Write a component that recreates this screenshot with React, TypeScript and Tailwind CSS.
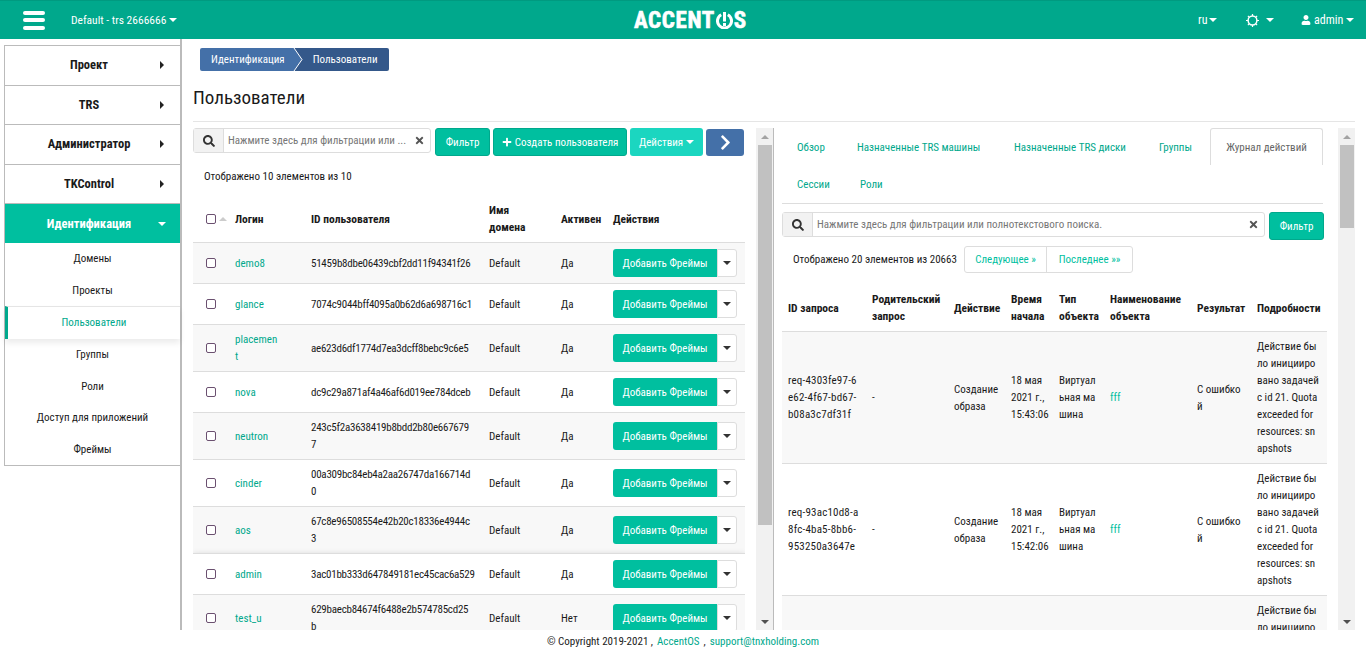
import React from "react";
import { FaChevronRight, FaPlus, FaSearch, FaTimes, FaUser } from "react-icons/fa";

const font = "font-['Liberation_Sans_Narrow','Roboto_Condensed','Roboto',sans-serif]";

const users = [
  ["demo8", "51459b8dbe06439cbf2dd11f94341f26", "Да"],
  ["glance", "7074c9044bff4095a0b62d6a698716c1", "Да"],
  ["placemen\nt", "ae623d6df1774d7ea3dcff8bebc9c6e5", "Да"],
  ["nova", "dc9c29a871af4a46af6d019ee784dceb", "Да"],
  ["neutron", "243c5f2a3638419b8bdd2b80e667679\n7", "Да"],
  ["cinder", "00a309bc84eb4a2aa26747da166714d\n0", "Да"],
  ["aos", "67c8e96508554e42b20c18336e4944c\n3", "Да"],
  ["admin", "3ac01bb333d647849181ec45cac6a529", "Да"],
  ["test_u", "629baecb84674f6488e2b574785cd25\nb", "Нет"],
];

const logs = [
  ["req-4303fe97-6\ne62-4f67-bd67-\nb08a3c7df31f", "15:43:06"],
  ["req-93ac10d8-a\n8fc-4ba5-8bb6-\n953250a3647e", "15:42:06"],
];

const details = "Действие бы\nло иницииро\nвано задачей\nс id 21. Quota\nexceeded for\nresources: sn\napshots";

const menu = ["Проект", "TRS", "Администратор", "TKControl"];
const subMenu = ["Домены", "Проекты", "Пользователи", "Группы", "Роли", "Доступ для приложений", "Фреймы"];

function Caret({ className = "border-t-white" }: { className?: string }) {
  return <span className={`inline-block w-0 h-0 border-x-[4px] border-x-transparent border-t-[4px] ${className}`} />;
}

function Gear() {
  return (
    <svg width="13" height="13" viewBox="0 0 13 13" fill="none" stroke="#fff">
      <circle cx="6.5" cy="6.5" r="4.4" strokeWidth="1.5" />
      <path d="M6.5 0v2M6.5 11v2M0 6.5h2M11 6.5h2M1.9 1.9l1.4 1.4M9.7 9.7l1.4 1.4M1.9 11.1l1.4-1.4M9.7 3.3l1.4-1.4" strokeWidth="1.2" />
    </svg>
  );
}

function Scrollbar({ thumb }: { thumb: string }) {
  return (
    <div className="w-[17px] shrink-0 bg-[#f1f1f1] flex flex-col items-center">
      <div className="h-[17px] flex items-center justify-center">
        <span className="w-0 h-0 border-x-[4px] border-x-transparent border-b-[4px] border-b-[#a3a3a3]" />
      </div>
      <div className={`w-[14px] bg-[#c1c1c1] ${thumb}`} />
      <div className="flex-1" />
      <div className="h-[17px] flex items-center justify-center">
        <Caret className="border-t-[#505050]" />
      </div>
    </div>
  );
}

function Checkbox() {
  return <span className="block w-[10px] h-[10px] border border-[#6b5070] rounded-[2px] bg-white" />;
}

function SearchBox({ text, className }: { text: string; className: string }) {
  return (
    <div className={`flex h-[25px] border border-[#ddd] rounded-[3px] bg-white ${className}`}>
      <div className="w-[30px] shrink-0 flex items-center justify-center bg-[#f2f2f2] border-r border-[#ddd] text-[#333]">
        <FaSearch size={12} />
      </div>
      <div className="flex-1 min-w-0 px-[4px] leading-[23px] text-[#777] truncate">{text}</div>
      <div className="w-[16px] shrink-0 flex items-center text-[#555]">
        <FaTimes size={11} />
      </div>
    </div>
  );
}

export default function App() {
  return (
    <div className={`${font} h-[652px] flex flex-col overflow-hidden bg-white text-[11px] leading-[17px] text-[#1a1a1a]`}>
      <header className="h-[39px] shrink-0 bg-[#00a88c] border-t border-[#009a80] flex items-center text-white text-[12px]">
        <div className="w-[71px] pl-[23px] flex flex-col gap-[3.5px]">
          <span className="block w-[22px] h-[4px] rounded-sm bg-white" />
          <span className="block w-[22px] h-[4px] rounded-sm bg-white" />
          <span className="block w-[22px] h-[4px] rounded-sm bg-white" />
        </div>
        <div className="w-[563px] flex items-center gap-[3px] text-[11.5px]">
          Default - trs 2666666 <Caret />
        </div>
        <div className="flex items-center text-[23px] leading-none font-bold tracking-[0.6px] [-webkit-text-stroke:0.6px_white]">
          ACCENT
          <svg width="17" height="17" viewBox="0 0 17 17" className="mx-[1px]">
            <path d="M5.2 2.8a7 7 0 1 0 6.6 0" fill="none" stroke="#fff" strokeWidth="3" />
            <rect x="7" y="0" width="3" height="9.5" fill="#fff" />
            <rect x="7" y="11" width="3" height="3" fill="#fff" />
          </svg>
          S
        </div>
        <div className="flex-1" />
        <div className="flex items-center gap-[2px] w-[48px]">ru <Caret /></div>
        <div className="flex items-center gap-[7px] w-[55px]"><Gear /> <Caret /></div>
        <div className="flex items-center gap-[3px] w-[65px]"><FaUser size={10} /> admin <Caret /></div>
      </header>

      <div className="flex-1 min-h-0 flex">
        <aside className="w-[182px] shrink-0 pl-[4px] border-r-[2px] border-[#bbb]">
          <nav className="mt-[6px] border border-r-0 border-[#bbb] bg-white">
            {menu.map((item) => (
              <div key={item} className="h-[39.5px] flex items-center border-b border-[#bbb] text-[12.5px] font-bold">
                <span className="w-[169px] text-center pr-[1px] pb-[1px]">{item}</span>
                <span className="w-0 h-0 -ml-[14px] border-y-[4px] border-y-transparent border-l-[4px] border-l-[#222]" />
              </div>
            ))}
            <div className="h-[39px] flex items-center bg-[#00bf9f] text-[12.5px] font-bold text-white">
              <span className="w-[169px] text-center pr-[1px] pb-[1px]">Идентификация</span>
              <span className="-ml-[16px] flex"><Caret /></span>
            </div>
            <div>
              {subMenu.map((item) => (
                <div
                  key={item}
                  className={
                    item === "Пользователи"
                      ? "h-[33px] pb-[1px] flex items-center justify-center border-l-[3px] border-[#00a88c] border-t border-t-[#e5e5e5] shadow-[0_4px_6px_rgba(0,0,0,0.08)] text-[#00a88c]"
                      : "h-[31.5px] flex items-center justify-center"
                  }
                >
                  {item}
                </div>
              ))}
            </div>
          </nav>
        </aside>

        <main className="flex-1 min-w-0 pl-[11px] pr-[11px] flex flex-col">
          <div className="pt-[9px] pl-[7px]">
            <div className="inline-flex h-[23px] rounded-[2px] overflow-hidden text-white leading-[23px]">
              <span className="bg-[#4470a8] pl-[11px] pr-[8px]">Идентификация</span>
              <svg width="10" height="23" viewBox="0 0 10 23" className="block bg-[#34588a]">
                <path d="M0 0 L0 23 L1 23 L9 11.5 L1 0 Z" fill="#4470a8" />
                <path d="M1 0 L9 11.5 L1 23" fill="none" stroke="#fff" strokeWidth="1" />
              </svg>
              <span className="bg-[#34588a] pl-[10px] pr-[11px]">Пользователи</span>
            </div>
          </div>
          <h1 className="text-[19px] leading-[26px] mt-[14px]">Пользователи</h1>
          <div className="h-px bg-[#e5e5e5] mt-[10px] shrink-0" />

          <div className="flex-1 min-h-0 flex mt-[6px]">
            <section className="w-[581px] shrink-0 flex border-r border-[#bbb]">
              <div className="w-[552px] shrink-0 overflow-hidden">
                <div className="flex items-start gap-[3px]">
                  <SearchBox text="Нажмите здесь для фильтрации или ..." className="w-[238px] mr-[1px]" />
                  <button className="w-[55px] h-[28px] rounded-[3px] bg-[#00bf9f] border border-[#00a88c] text-white">Фильтр</button>
                  <button className="w-[134px] h-[28px] rounded-[3px] bg-[#00bf9f] border border-[#00a88c] text-white flex items-center justify-center gap-[3px]">
                    <FaPlus size={10} /> Создать пользователя
                  </button>
                  <button className="w-[73px] h-[28px] rounded-[3px] bg-[#1bd6c0] text-white flex items-center justify-center gap-[3px]">
                    Действия <Caret />
                  </button>
                  <button className="w-[38px] h-[27px] mt-[1px] rounded-[3px] bg-[#4470a8] text-white flex items-center justify-center">
                    <FaChevronRight size={17} />
                  </button>
                </div>
                <div className="pl-[11px] mt-[12px]">Отображено 10 элементов из 10</div>
                <table className="w-[552px] table-fixed border-collapse mt-[11px]">
                  <colgroup>
                    <col className="w-[42px]" />
                    <col className="w-[76px]" />
                    <col className="w-[178px]" />
                    <col className="w-[72px]" />
                    <col className="w-[52px]" />
                    <col />
                  </colgroup>
                  <thead>
                    <tr className="font-bold text-left text-[11.5px] align-middle">
                      <th className="pl-[13px] py-[6px]">
                        <span className="flex items-center gap-[3px]">
                          <Checkbox />
                          <span className="w-0 h-0 border-x-[4px] border-x-transparent border-b-[4px] border-b-[#ccc]" />
                        </span>
                      </th>
                      <th className="py-[6px]">Логин</th>
                      <th className="py-[6px]">ID пользователя</th>
                      <th className="py-[6px] whitespace-pre-line">{"Имя\nдомена"}</th>
                      <th className="py-[6px]">Активен</th>
                      <th className="py-[6px]">Действия</th>
                    </tr>
                  </thead>
                  <tbody>
                    {users.map(([login, id, active], i) => (
                      <tr
                        key={login}
                        className={`border-t border-[#ddd] ${login === "admin" ? "bg-white shadow-[0_0_6px_rgba(0,0,0,0.15)]" : i % 2 === 0 ? "bg-[#f8f8f8]" : "bg-white"}`}
                      >
                        <td className="pl-[13px] py-[6px]"><Checkbox /></td>
                        <td className="py-[6px] text-[#00a88c] whitespace-pre-line">{login}</td>
                        <td className="py-[6px] whitespace-pre-line tracking-[-0.25px]">{id}</td>
                        <td className="py-[6px]">Default</td>
                        <td className="py-[6px]">{active}</td>
                        <td className="py-[6px]">
                          <div className="flex h-[28px]">
                            <button className="w-[104px] rounded-l-[3px] bg-[#00bf9f] text-white">Добавить Фреймы</button>
                            <button className="w-[20px] flex items-center justify-center rounded-r-[3px] border border-[#ddd] bg-white">
                              <Caret className="border-t-[#333]" />
                            </button>
                          </div>
                        </td>
                      </tr>
                    ))}
                  </tbody>
                </table>
              </div>
              <div className="w-[11px] shrink-0" />
              <Scrollbar thumb="h-[380px]" />
            </section>

            <section className="flex-1 min-w-0 flex pl-[8px]">
              <div className="w-[556px] shrink-0 overflow-hidden">
                <div className="w-[541px] border-b border-[#ddd] h-[76px]">
                  <div className="flex h-[37px] items-center text-[#00a88c] pt-[2px]">
                    <span className="pl-[15px] w-[75px]">Обзор</span>
                    <span className="w-[157px]">Назначенные TRS машины</span>
                    <span className="w-[145px]">Назначенные TRS диски</span>
                    <span className="w-[51px]">Группы</span>
                    <span className="-mt-[2px] h-[37px] w-[113px] border border-b-0 border-[#ddd] rounded-t-[3px] bg-white text-[#666] leading-[37px] text-center">Журнал действий</span>
                  </div>
                  <div className="flex h-[38px] items-center text-[#00a88c]">
                    <span className="pl-[15px] w-[78px]">Сессии</span>
                    <span>Роли</span>
                  </div>
                </div>
                <div className="flex items-start gap-[4px] mt-[8px]">
                  <SearchBox text="Нажмите здесь для фильтрации или полнотекстового поиска." className="w-[483px]" />
                  <button className="w-[55px] h-[28px] rounded-[3px] bg-[#00bf9f] border border-[#00a88c] text-white">Фильтр</button>
                </div>
                <div className="flex items-center mt-[6px] h-[27px]">
                  <span className="pl-[11px] w-[182px]">Отображено 20 элементов из 20663</span>
                  <div className="flex h-[27px] border border-[#ddd] rounded-[3px] text-[#00bf9f] leading-[25px]">
                    <span className="w-[82px] text-center border-r border-[#ddd]">Следующее »</span>
                    <span className="w-[85px] text-center">Последнее »»</span>
                  </div>
                </div>
                <table className="w-[545px] table-fixed border-collapse mt-[12px]">
                  <colgroup>
                    <col className="w-[90px]" />
                    <col className="w-[82px]" />
                    <col className="w-[57px]" />
                    <col className="w-[48px]" />
                    <col className="w-[51px]" />
                    <col className="w-[87px]" />
                    <col className="w-[60px]" />
                    <col />
                  </colgroup>
                  <thead>
                    <tr className="font-bold text-left text-[11.5px]">
                      <th className="pl-[6px] py-[6px]">ID запроса</th>
                      <th className="py-[6px] whitespace-pre-line">{"Родительский\nзапрос"}</th>
                      <th className="py-[6px]">Действие</th>
                      <th className="py-[6px] whitespace-pre-line">{"Время\nначала"}</th>
                      <th className="py-[6px] whitespace-pre-line">{"Тип\nобъекта"}</th>
                      <th className="py-[6px] whitespace-pre-line">{"Наименование\nобъекта"}</th>
                      <th className="py-[6px]">Результат</th>
                      <th className="py-[6px]">Подробности</th>
                    </tr>
                  </thead>
                  <tbody>
                    {logs.map(([id, time], i) => (
                      <tr key={id} className={`border-t border-[#ddd] ${i % 2 === 0 ? "bg-[#f8f8f8]" : "bg-white"}`}>
                        <td className="pl-[6px] whitespace-pre-line tracking-[0.2px]">{id}</td>
                        <td>-</td>
                        <td className="whitespace-pre-line">{"Создание\nобраза"}</td>
                        <td className="whitespace-pre-line">{`18 мая\n2021 г.,\n${time}`}</td>
                        <td className="whitespace-pre-line">{"Виртуал\nьная ма\nшина"}</td>
                        <td className="text-[#00bf9f]">fff</td>
                        <td className="whitespace-pre-line">{"С ошибко\nй"}</td>
                        <td className="py-[6px] whitespace-pre-line">{details}</td>
                      </tr>
                    ))}
                    <tr className="border-t border-[#ddd] bg-[#f8f8f8]">
                      <td colSpan={7} />
                      <td className="py-[6px] whitespace-pre-line">{details}</td>
                    </tr>
                  </tbody>
                </table>
              </div>
              <Scrollbar thumb="h-[83px]" />
            </section>
          </div>
        </main>
      </div>

      <footer className="h-[22px] shrink-0 flex items-center justify-center gap-[4px] bg-white">
        <span>© Copyright 2019-2021 ,</span>
        <span className="text-[#00a88c]">AccentOS</span>
        <span>,</span>
        <span className="text-[#00a88c]">support@tnxholding.com</span>
      </footer>
    </div>
  );
}
